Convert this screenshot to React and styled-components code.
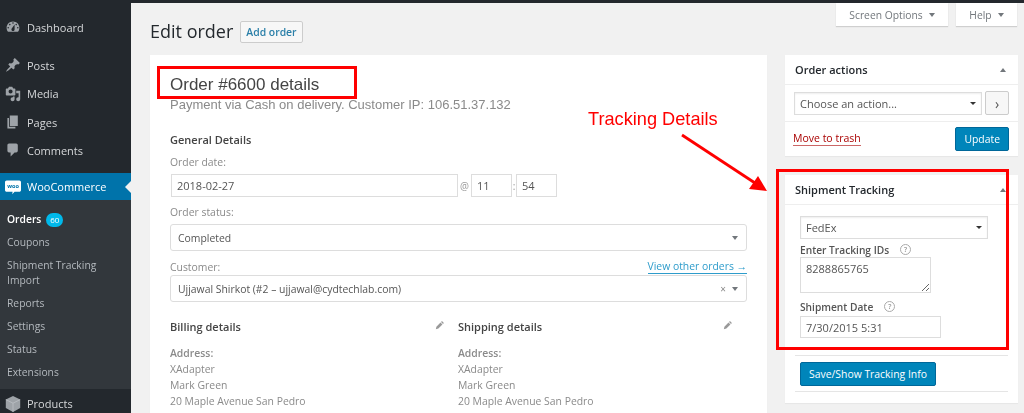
import React from 'react';
import styled, { createGlobalStyle } from 'styled-components';

const GlobalStyle = createGlobalStyle`
  html, body {
    margin: 0;
    padding: 0;
    height: 413px;
    overflow: hidden;
    background: #f1f1f1;
  }
  * { box-sizing: border-box; }
  body {
    font-family: "Open Sans", "Liberation Sans", sans-serif;
    font-size: 10.4px;
    color: #444;
  }
`;

const Page = styled.div`
  position: relative;
  display: flex;
  width: 1024px;
  height: 413px;
  overflow: hidden;
  border-top: 3px solid #23282d;
  filter: blur(0.35px);
`;

/* sidebar */
const Sidebar = styled.nav`
  flex: 0 0 131px;
  background: #23282d;
  padding-top: 10px;
`;

const MenuItem = styled.div`
  position: relative;
  display: flex;
  align-items: center;
  height: ${p => (p.$current ? 27 : 28.3)}px;
  margin-top: ${p => p.$gap || 0}px;
  padding-left: 5px;
  gap: 6px;
  color: ${p => (p.$current ? '#fff' : '#d6d8da')};
  background: ${p => (p.$current ? '#0073aa' : 'transparent')};
  font-size: 11px;

  svg {
    flex: 0 0 16px;
    width: 16px;
    height: 16px;
    fill: ${p => (p.$current ? '#fff' : '#9ea3a8')};
  }
`;

const CurrentNotch = styled.span`
  position: absolute;
  right: 0;
  top: 8px;
  border: 6px solid transparent;
  border-right-color: #f1f1f1;
  border-left-width: 0;
`;

const Submenu = styled.div`
  background: #32373c;
  padding: 7px 0 6px;
`;

const SubItem = styled.div`
  padding: 4.25px 7px;
  line-height: 14.5px;
  font-size: 10.3px;
  color: ${p => (p.$current ? '#fff' : '#b4b9be')};
  font-weight: ${p => (p.$current ? 600 : 400)};
`;

const Badge = styled.span`
  display: inline-block;
  margin-left: 5px;
  width: 17px;
  height: 14px;
  line-height: 14px;
  text-align: center;
  border-radius: 7px;
  background: #00b9eb;
  color: #fff;
  font-size: 8px;
  font-weight: 400;
  vertical-align: 0;
`;

/* content */
const Content = styled.main`
  flex: 1;
  min-width: 0;
  padding: 0 7px 0 19px;
`;

const Header = styled.header`
  display: flex;
  align-items: flex-start;
  height: 52px;
`;

const Title = styled.h1`
  margin: 16px 0 0;
  font-size: 18px;
  line-height: 25px;
  font-weight: 400;
  color: #23282d;
`;

const AddButton = styled.div`
  margin: 18px 0 0 7px;
  height: 22px;
  line-height: 20px;
  padding: 0 5px;
  border: 1px solid #ccc;
  border-radius: 2px;
  background: #f7f7f7;
  color: #2a7fa8;
  font-size: 10.4px;
  font-weight: 600;
`;

const Tabs = styled.div`
  display: flex;
  gap: 8px;
  margin-left: auto;
`;

const Tab = styled.div`
  display: flex;
  align-items: center;
  justify-content: center;
  gap: 6px;
  width: ${p => p.$w}px;
  height: 23px;
  background: #fff;
  box-shadow: 0 1px 1px rgba(0, 0, 0, 0.14);
  color: #72777c;
  font-size: 10.3px;
`;

const Caret = styled.span`
  flex: none;
  width: 0;
  height: 0;
  border-left: ${p => p.$size || 3.5}px solid transparent;
  border-right: ${p => p.$size || 3.5}px solid transparent;
  border-top: ${p => p.$size || 4}px solid ${p => p.$color || '#72777c'};
`;

const UpCaret = styled.span`
  width: 0;
  height: 0;
  border-left: 3.5px solid transparent;
  border-right: 3.5px solid transparent;
  border-bottom: 4px solid #72777c;
`;

const Columns = styled.div`
  display: flex;
  gap: 18px;
  align-items: flex-start;
`;

const OrderCard = styled.section`
  flex: 0 0 617px;
  height: 360px;
  background: #fff;
  padding: 20px;
  box-shadow: 0 1px 1px rgba(0, 0, 0, 0.04);
`;

const OrderHeading = styled.h2`
  margin: 0;
  font-family: "Liberation Sans", Arial, sans-serif;
  font-size: 17px;
  line-height: 20px;
  font-weight: 400;
  color: #444;
`;

const PaymentLine = styled.p`
  margin: 0 0 17px;
  font-family: "Liberation Sans", Arial, sans-serif;
  font-size: 13px;
  line-height: 20px;
  color: #8a8a8a;
`;

const SectionTitle = styled.h3`
  margin: 0 0 8px;
  font-size: 11px;
  line-height: 15px;
  font-weight: 600;
  color: #444;
`;

const FieldLabel = styled.div`
  display: flex;
  justify-content: space-between;
  line-height: 15px;
  height: 15px;
  margin-bottom: ${p => p.$mb ?? 4}px;
  color: #8a8a8a;
`;

const ViewLink = styled.span`
  color: #2e9ccb;
  border-bottom: 1px solid #2e9ccb;
  line-height: 13px;
  height: 14px;
`;

const DateRow = styled.div`
  display: flex;
  align-items: center;
  margin: 0 0 8px 1px;
  color: #999;
`;

const PlainInput = styled.input`
  display: block;
  width: ${p => p.$w}px;
  height: ${p => p.$h || 23}px;
  padding: 0 5px;
  border: 1px solid #ddd;
  border-radius: 0;
  outline: none;
  background: #fff;
  color: #555;
  font: 11px "Open Sans", sans-serif;
`;

const Sep = styled.span`
  width: ${p => p.$w}px;
  text-align: center;
  font-size: 10px;
`;

const SelectBox = styled.div`
  display: flex;
  align-items: center;
  height: 27px;
  margin-bottom: ${p => p.$mb || 0}px;
  padding: 0 8px 0 7px;
  border: 1px solid #ddd;
  border-radius: 3px;
  color: #555;
`;

const SelectValue = styled.span`
  flex: 1;
`;

const ClearMark = styled.span`
  margin-right: 6px;
  color: #888;
  font-size: 10px;
`;

const AddressGrid = styled.div`
  display: grid;
  grid-template-columns: 275px 275px;
  gap: 13px;
  margin-top: 16px;
`;

const AddressTitle = styled.div`
  display: flex;
  justify-content: space-between;
  align-items: flex-start;
  margin-bottom: 10px;
  font-size: 11px;
  line-height: 17px;
  font-weight: 600;
  color: #444;

  svg {
    width: 10px;
    height: 10px;
    margin-top: 2px;
    fill: #999;
  }
`;

const AddressLine = styled.div`
  line-height: 16px;
  color: #8a8a8a;
  font-weight: ${p => (p.$strong ? 600 : 400)};
`;

/* right column */
const SideColumn = styled.aside`
  flex: 0 0 232px;
  display: flex;
  flex-direction: column;
  gap: 19px;
`;

const Box = styled.section`
  background: #fff;
  box-shadow: 0 1px 1px rgba(0, 0, 0, 0.04);
`;

const BoxHeader = styled.div`
  display: flex;
  align-items: center;
  justify-content: space-between;
  height: 30px;
  padding: 0 12px 0 10px;
  border-bottom: 1px solid #eee;
  font-size: 11px;
  font-weight: 600;
  color: #23282d;
`;

const ActionRow = styled.div`
  display: flex;
  gap: 3px;
  padding: 7px 9px 6px;
  border-bottom: 1px solid #eee;
`;

const NativeSelect = styled.div`
  display: flex;
  align-items: center;
  justify-content: space-between;
  width: ${p => p.$w}px;
  height: 23px;
  padding: 0 5px;
  border: 1px solid #ddd;
  box-shadow: inset 0 1px 2px rgba(0, 0, 0, 0.07);
  color: #555;
  font-size: 11px;
`;

const GoButton = styled.div`
  display: flex;
  align-items: center;
  justify-content: center;
  width: 24px;
  height: 24px;
  margin-top: -1px;
  border: 1px solid #ccc;
  border-radius: 2px;
  background: #f7f7f7;
  color: #555;
  font-size: 14px;
`;

const ActionFooter = styled.div`
  display: flex;
  align-items: center;
  justify-content: space-between;
  padding: 5px 9px 5px 8px;
`;

const TrashLink = styled.span`
  color: #a00;
  border-bottom: 1px solid #c66;
  line-height: 13px;
  font-size: 10.5px;
`;

const PrimaryButton = styled.div`
  display: inline-block;
  height: 24px;
  line-height: 23px;
  padding: 0 ${p => p.$pad}px;
  border: 1px solid #006799;
  border-radius: 2px;
  background: #0085ba;
  color: #fff;
  font-size: 10.4px;
`;

const TrackingBody = styled.div`
  padding: 11px 0 0 15px;
`;

const TrackLabel = styled.div`
  display: flex;
  align-items: center;
  gap: ${p => p.$gap}px;
  height: 15px;
  margin: ${p => p.$mt}px 0 ${p => p.$mb}px;
  font-size: 10.2px;
  font-weight: 600;
  color: #555;
`;

const HelpIcon = styled.span`
  display: flex;
  align-items: center;
  justify-content: center;
  width: 11px;
  height: 11px;
  border: 1px solid #aaa;
  border-radius: 50%;
  color: #999;
  font-size: 7px;
`;

const TrackingArea = styled.textarea`
  display: block;
  width: 131px;
  height: 36px;
  margin: 0;
  padding: 3px 5px;
  border: 1px solid #ddd;
  border-radius: 0;
  outline: none;
  color: #555;
  font: 11px/15px "Open Sans", sans-serif;
`;

const TrackingFooter = styled.div`
  margin: 17px 10px 11px;
  padding: 6px 0 5px 5px;
  border-top: 1px solid #e5e5e5;
  border-bottom: 1px solid #e5e5e5;
`;

/* red annotations sit on top of the screenshot */
const RedBox = styled.div`
  position: absolute;
  left: ${p => p.$x}px;
  top: ${p => p.$y}px;
  width: ${p => p.$w}px;
  height: ${p => p.$h}px;
  border: 3px solid #f00;
`;

const TrackingNote = styled.div`
  position: absolute;
  left: 588px;
  top: 104px;
  font-family: "Liberation Sans", Arial, sans-serif;
  font-size: 18.2px;
  line-height: 24px;
  color: #f00;
`;

const Arrow = styled.svg`
  position: absolute;
  left: 670px;
  top: 125px;
`;

const icons = {
  dashboard:
    'M3.76 16h12.48c1.1-1.37 1.76-3.11 1.76-5 0-4.42-3.58-8-8-8s-8 3.58-8 8c0 1.89.66 3.63 1.76 5zM10 4c.55 0 1 .45 1 1s-.45 1-1 1-1-.45-1-1 .45-1 1-1zM6 6c.55 0 1 .45 1 1s-.45 1-1 1-1-.45-1-1 .45-1 1-1zm8 0c.55 0 1 .45 1 1s-.45 1-1 1-1-.45-1-1 .45-1 1-1zm-5.37 5.55L12 7v6c0 1.1-.9 2-2 2s-2-.9-2-2c0-.57.24-1.08.63-1.45zM4 10c.55 0 1 .45 1 1s-.45 1-1 1-1-.45-1-1 .45-1 1-1zm12 0c.55 0 1 .45 1 1s-.45 1-1 1-1-.45-1-1 .45-1 1-1z',
  post:
    'M10.44 3.02l1.82-1.82 6.36 6.35-1.83 1.82c-1.05-.68-2.48-.57-3.41.36l-.75.75c-.92.93-1.04 2.35-.35 3.41l-1.83 1.82-2.41-2.41-2.8 2.79c-.42.42-3.38 2.71-3.8 2.29s1.86-3.39 2.28-3.81l2.79-2.79L4.1 9.36l1.83-1.82c1.05.69 2.48.57 3.4-.36l.75-.75c.93-.92 1.05-2.35.36-3.41z',
  media:
    'M13 11V4c0-.55-.45-1-1-1h-1.67L9 1H5L3.67 3H2c-.55 0-1 .45-1 1v7c0 .55.45 1 1 1h10c.55 0 1-.45 1-1zM7 4.5c1.38 0 2.5 1.12 2.5 2.5S8.38 9.5 7 9.5 4.5 8.38 4.5 7 5.62 4.5 7 4.5zM14 6h5v10.5c0 1.38-1.12 2.5-2.5 2.5S14 17.88 14 16.5s1.12-2.5 2.5-2.5c.17 0 .34.02.5.05V9h-3V6zm-4 8.05V13h2v3.5c0 1.38-1.12 2.5-2.5 2.5S7 17.88 7 16.5 8.12 14 9.5 14c.17 0 .34.02.5.05z',
  page: 'M6 15V2h10v13H6zm-1 1h8v2H3V5h2v11z',
  comments:
    'M5 2h9c1.1 0 2 .9 2 2v7c0 1.1-.9 2-2 2h-2l-5 5v-5H5c-1.1 0-2-.9-2-2V4c0-1.1.9-2 2-2z',
};

const Icon = ({ name }) => (
  <svg viewBox="0 0 20 20">
    <path d={icons[name]} />
  </svg>
);

const WooIcon = () => (
  <svg viewBox="0 0 20 20">
    <path d="M2 2h16c1 0 2 1 2 2v10c0 1-1 2-2 2h-6l-3 3 .5-3H2c-1 0-2-1-2-2V4c0-1 1-2 2-2z" />
    <text x="10" y="11.500" textAnchor="middle" fontSize="7" fontWeight="700" fill="#0073aa" fontFamily="Open Sans, sans-serif">
      woo
    </text>
  </svg>
);

const BoxIcon = () => (
  <svg viewBox="0 0 20 20">
    <path d="M10 0l9 4.500v10.500l-9 5-9-5V4.500L10 0z" />
    <path d="M1 4.500l9 4.500 9-4.500M10 9v11" fill="none" stroke="#c9ccd0" strokeWidth=".7" />
  </svg>
);

const Pencil = () => (
  <svg viewBox="0 0 20 20">
    <path d="M13.900 2.200l3.900 3.900-1.800 1.800-3.900-3.900 1.800-1.800zM11 5.100l3.900 3.900-8.200 8.200-5 1.100 1.100-5 8.200-8.200z" />
  </svg>
);

const subItems = ['Coupons', 'Shipment Tracking Import', 'Reports', 'Settings', 'Status', 'Extensions'];

const addressLines = ['XAdapter', 'Mark Green', '20 Maple Avenue San Pedro'];

const AddressBlock = ({ title }) => (
  <div>
    <AddressTitle>
      {title}
      <Pencil />
    </AddressTitle>
    <AddressLine $strong>Address:</AddressLine>
    {addressLines.map(line => (
      <AddressLine key={line}>{line}</AddressLine>
    ))}
  </div>
);

export default function App() {
  return (
    <>
      <GlobalStyle />
      <Page>
        <Sidebar>
          <MenuItem><Icon name="dashboard" />Dashboard</MenuItem>
          <MenuItem $gap={10}><Icon name="post" />Posts</MenuItem>
          <MenuItem><Icon name="media" />Media</MenuItem>
          <MenuItem><Icon name="page" />Pages</MenuItem>
          <MenuItem><Icon name="comments" />Comments</MenuItem>
          <MenuItem $current $gap={9}>
            <WooIcon />WooCommerce<CurrentNotch />
          </MenuItem>
          <Submenu>
            <SubItem $current>Orders<Badge>60</Badge></SubItem>
            {subItems.map(item => (
              <SubItem key={item}>{item}</SubItem>
            ))}
          </Submenu>
          <MenuItem><BoxIcon />Products</MenuItem>
        </Sidebar>

        <Content>
          <Header>
            <Title>Edit order</Title>
            <AddButton>Add order</AddButton>
            <Tabs>
              <Tab $w={112}>Screen Options<Caret /></Tab>
              <Tab $w={61}>Help<Caret /></Tab>
            </Tabs>
          </Header>

          <Columns>
            <OrderCard>
              <OrderHeading>Order #6600 details</OrderHeading>
              <PaymentLine>Payment via Cash on delivery. Customer IP: 106.51.37.132</PaymentLine>
              <SectionTitle>General Details</SectionTitle>
              <FieldLabel>Order date:</FieldLabel>
              <DateRow>
                <PlainInput $w={287} readOnly defaultValue="2018-02-27" />
                <Sep $w={13}>@</Sep>
                <PlainInput $w={41} readOnly defaultValue="11" />
                <Sep $w={4}>:</Sep>
                <PlainInput $w={41} readOnly defaultValue="54" />
              </DateRow>
              <FieldLabel>Order status:</FieldLabel>
              <SelectBox $mb={9}>
                <SelectValue>Completed</SelectValue>
                <Caret />
              </SelectBox>
              <FieldLabel $mb={0}>
                Customer:
                <ViewLink>View other orders →</ViewLink>
              </FieldLabel>
              <SelectBox>
                <SelectValue>Ujjawal Shirkot (#2 – ujjawal@cydtechlab.com)</SelectValue>
                <ClearMark>×</ClearMark>
                <Caret />
              </SelectBox>
              <AddressGrid>
                <AddressBlock title="Billing details" />
                <AddressBlock title="Shipping details" />
              </AddressGrid>
            </OrderCard>

            <SideColumn>
              <Box>
                <BoxHeader>Order actions<UpCaret /></BoxHeader>
                <ActionRow>
                  <NativeSelect $w={188}>
                    Choose an action...
                    <Caret $size={3} $color="#333" />
                  </NativeSelect>
                  <GoButton>›</GoButton>
                </ActionRow>
                <ActionFooter>
                  <TrashLink>Move to trash</TrashLink>
                  <PrimaryButton $pad={8}>Update</PrimaryButton>
                </ActionFooter>
              </Box>

              <Box>
                <BoxHeader>Shipment Tracking<UpCaret /></BoxHeader>
                <TrackingBody>
                  <NativeSelect $w={188}>
                    FedEx
                    <Caret $size={3} $color="#333" />
                  </NativeSelect>
                  <TrackLabel $gap={11} $mt={3} $mb={0}>Enter Tracking IDs<HelpIcon>?</HelpIcon></TrackLabel>
                  <TrackingArea readOnly defaultValue="8288865765" />
                  <TrackLabel $gap={11} $mt={6} $mb={2}>Shipment Date<HelpIcon>?</HelpIcon></TrackLabel>
                  <PlainInput $w={141} $h={22} readOnly defaultValue="7/30/2015 5:31" />
                </TrackingBody>
                <TrackingFooter>
                  <PrimaryButton $pad={8}>Save/Show Tracking Info</PrimaryButton>
                </TrackingFooter>
              </Box>
            </SideColumn>
          </Columns>
        </Content>

        <RedBox $x={157} $y={63} $w={200} $h={33} />
        <RedBox $x={776} $y={166} $w={233} $h={181} />
        <TrackingNote>Tracking Details</TrackingNote>
        <Arrow width="110" height="80" viewBox="0 0 110 80">
          <line x1="12" y1="7" x2="85" y2="55" stroke="#f00" strokeWidth="2.8" />
          <polygon points="97,63 79,61 88,48" fill="#f00" />
        </Arrow>
      </Page>
    </>
  );
}
